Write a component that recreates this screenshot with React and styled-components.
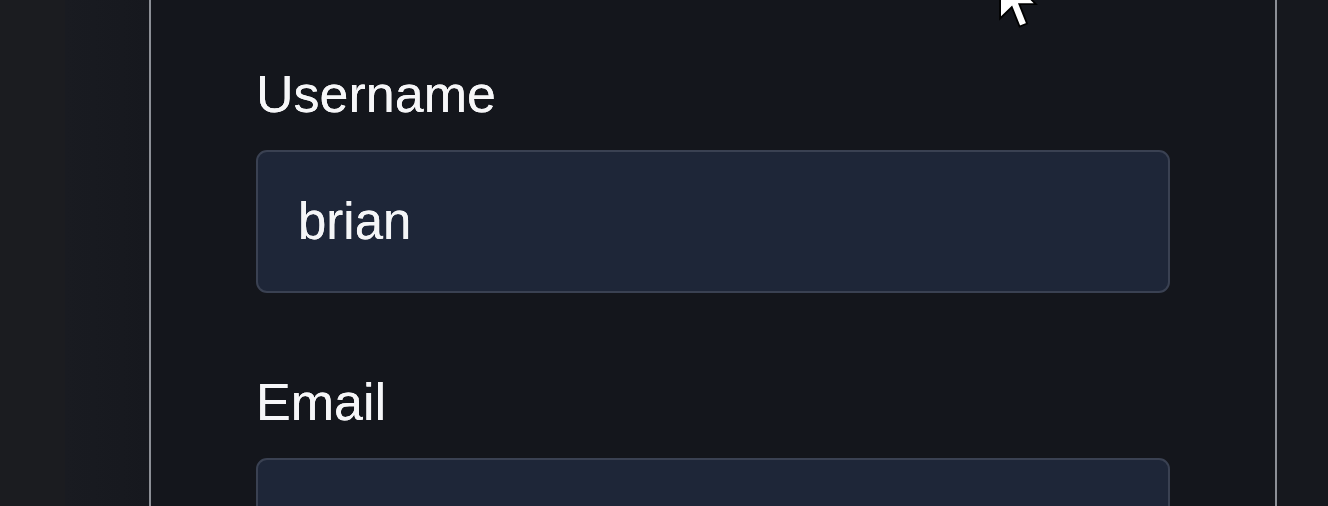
import React from "react";
import styled, { createGlobalStyle } from "styled-components";

const GlobalStyle = createGlobalStyle`
  html, body {
    margin: 0;
    padding: 0;
    background: #16181e;
    font-family: "Liberation Sans", Arial, sans-serif;
  }
`;

const Page = styled.div`
  position: relative;
  display: flex;
  width: 1328px;
  height: 506px;
  overflow: hidden;
  background: #16181e;
`;

const Gutter = styled.div`
  flex: 0 0 ${(p) => p.width}px;
  background: ${(p) => p.bg};
`;

const Card = styled.div`
  flex: 0 0 1128px;
  box-sizing: border-box;
  background: #14161c;
  border-left: 2px solid #8c8f96;
  border-right: 2px solid #8c8f96;
  padding: 64px 105px 0;
  display: flex;
  flex-direction: column;
`;

const Field = styled.div`
  display: flex;
  flex-direction: column;
  margin-bottom: 79px;
`;

const Label = styled.label`
  display: block;
  font-size: 52px;
  line-height: 61px;
  color: #f6f6f8;
  margin-bottom: 25px;
  text-shadow: 0 0 0.6px #ffffff;
`;

const Input = styled.input`
  box-sizing: border-box;
  width: 914px;
  height: 143px;
  padding: 0 40px;
  border: 2px solid #3a4152;
  border-radius: 11px;
  background: #1e2638;
  color: #f4f5f7;
  font-family: "Liberation Sans", Arial, sans-serif;
  font-size: 51px;
  text-shadow: 0 0 0.6px #ffffff;
  outline: none;
`;

const Cursor = styled.svg`
  position: absolute;
  left: 998px;
  top: -34px;
  width: 42px;
  height: 66px;
`;

export default function App() {
  return (
    <>
      <GlobalStyle />
      <Page>
        <Gutter width={65} bg="#1b1c20" />
        <Gutter width={84} bg="linear-gradient(90deg, #191b21, #16181e)" />
        <Card>
          <Field>
            <Label htmlFor="username">Username</Label>
            <Input id="username" defaultValue="brian" />
          </Field>
          <Field>
            <Label htmlFor="email">Email</Label>
            <Input id="email" defaultValue="" />
          </Field>
        </Card>
        <Gutter width={51} bg="#16181e" />
        <Cursor viewBox="0 0 14 22">
          <path
            d="M0.7 0.7 L0.7 17.5 L4.6 13.7 L7.2 20.2 L9.7 19.2 L7.1 12.7 L12.6 12.7 Z"
            fill="#ffffff"
            stroke="#000000"
            strokeWidth="0.6"
            strokeLinejoin="miter"
          />
        </Cursor>
      </Page>
    </>
  );
}
